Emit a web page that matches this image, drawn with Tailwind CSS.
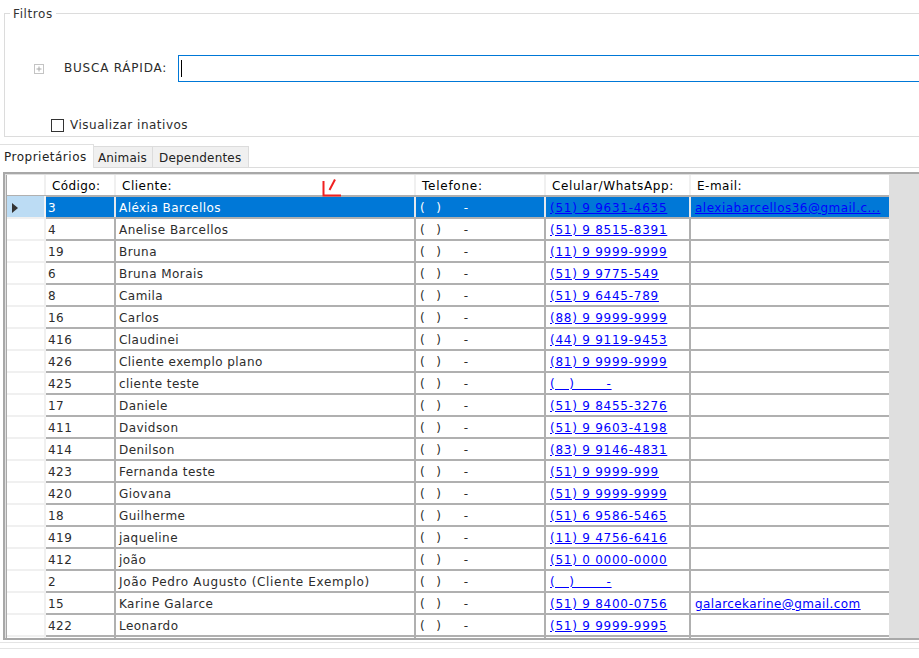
<!DOCTYPE html>
<html><head><meta charset="utf-8"><script src="https://cdn.jsdelivr.net/npm/@tailwindcss/browser@4"></script></head>
<body class="bg-white">
<div class="relative w-[919px] h-[658px] overflow-hidden bg-white font-['DejaVu_Sans',sans-serif] text-[12px] leading-[14px] text-[#2c2c2c] tracking-[0.45px] pt-[13px]">
  <section class="relative h-[124px] ml-[4px] border-t border-l border-b border-[#dcdcdc] flex flex-col">
    <span class="absolute left-[5px] top-[-7px] bg-white px-[3px] text-[#333] tracking-[0.6px]">Filtros</span>
    <div class="flex items-center mt-[41px] h-[27px]">
      <svg class="ml-[29px] w-[10px] h-[10px]" viewBox="0 0 10 10"><rect x="0.5" y="0.5" width="9" height="9" fill="none" stroke="#c4c4c4"/><path d="M2.5 5h5M5 2.5v5" stroke="#a8a8a8"/></svg>
      <span class="ml-[20px] w-[114px] tracking-[0.78px] mb-[2px]">BUSCA RÁPIDA:</span>
      <div class="flex-1 h-[27px] border-t border-b border-l border-[#0078d7] flex items-center pl-[2px] mr-[-2px]"><div class="w-px h-[17px] bg-black"></div></div>
    </div>
    <label class="flex items-center mt-[36px] ml-[46px]">
      <span class="w-[13px] h-[13px] border border-[#333] bg-white"></span>
      <span class="ml-[6px] tracking-[0.5px]">Visualizar inativos</span>
    </label>
  </section>
  <nav class="flex items-end h-[31px] border-b border-[#dcdcdc] text-[#222]">
    <div class="w-[94px] h-[24px] pl-[4px] pt-[5px] bg-white border-t border-r border-[#e0e0e0] mb-[-1px] tracking-[0.5px]">Proprietários</div>
    <div class="w-[59px] h-[21px] pl-[4px] pt-[4px] bg-[#f0f0f0] border-t border-r border-[#dcdcdc] tracking-[0.15px]">Animais</div>
    <div class="w-[96px] h-[21px] pl-[6px] pt-[4px] bg-[#f0f0f0] border-t border-r border-[#dcdcdc] tracking-[0.2px]">Dependentes</div>
  </nav>
  <div class="mt-[4px] ml-[3px] h-[468px] border-t-2 border-l-2 border-b-2 border-[#a8a8a8] pl-[1px] pt-px bg-[#dfdfdf] overflow-hidden">
    <div class="w-[883px] bg-white border-l border-[#a8a8a8] h-full overflow-hidden">
      <div class="flex h-[20px] text-black">
        <div class="w-[39px] border-r-2 border-[#f0f0f0]"></div>
        <div class="w-[70px] pl-[6px] pt-[4px] border-r-2 border-[#f0f0f0] tracking-[0.4px]">Código:</div>
        <div class="w-[300px] pl-[6px] pt-[4px] border-r-2 border-[#f0f0f0] tracking-[0.5px]">Cliente:</div>
        <div class="w-[130px] pl-[6px] pt-[4px] border-r-2 border-[#f0f0f0] tracking-[0.75px]">Telefone:</div>
        <div class="w-[145px] pl-[6px] pt-[4px] border-r-2 border-[#f0f0f0] tracking-[0.6px]">Celular/WhatsApp:</div>
        <div class="flex-1 pl-[6px] pt-[4px] tracking-[0.5px]">E-mail:</div>
      </div>
      <div class="flex h-[22px] border-t-2 border-[#b0b0b0] text-white">
        <div class="w-[39px] mt-[-1px] bg-[#bcdcf4] flex items-center pl-[5px] pt-[2px] border-r-2 border-[#f4f4f4]"><svg class="w-[6px] h-[10px]" viewBox="0 0 6 10"><path d="M0 0l6 5-6 5z" fill="#333"/></svg></div>
        <div class="w-[70px] pl-[2px] pt-[4px] border-r-2 border-[#e4e8ec] bg-[#0078d7]">3</div>
        <div class="w-[300px] pl-[3px] pt-[4px] border-r-2 border-[#e4e8ec] bg-[#0078d7]">Aléxia Barcellos</div>
        <div class="w-[130px] pl-[4px] pt-[4px] border-r-2 border-[#e4e8ec] bg-[#0078d7] whitespace-pre tracking-normal">(   )      -</div>
        <div class="w-[145px] pl-[4px] pt-[4px] border-r-2 border-[#e4e8ec] bg-[#0078d7] tracking-[0.75px]"><a class="text-[#0000ff] underline">(51) 9 9631-4635</a></div>
        <div class="flex-1 pl-[4px] pt-[4px] bg-[#0078d7] whitespace-nowrap tracking-[0.48px]"><a class="text-[#0000ff] underline">alexiabarcellos36@gmail.c...</a></div>
      </div>
      <div class="flex h-[22px] border-t-2 border-[#b0b0b0]"><div class="w-[39px] mt-[-2px] border-t-2 border-r-2 border-[#f0f0f0]"></div><div class="w-[70px] pl-[2px] pt-[4px] border-r-2 border-[#b0b0b0]">4</div><div class="w-[300px] pl-[3px] pt-[4px] border-r-2 border-[#b0b0b0]">Anelise Barcellos</div><div class="w-[130px] pl-[4px] pt-[4px] border-r-2 border-[#b0b0b0] whitespace-pre tracking-normal">(   )      -</div><div class="w-[145px] pl-[4px] pt-[4px] border-r-2 border-[#b0b0b0] tracking-[0.75px]"><a class="text-[#0000ff] underline">(51) 9 8515-8391</a></div><div class="flex-1 pl-[4px] pt-[4px] tracking-[0.48px]"></div></div>
      <div class="flex h-[22px] border-t-2 border-[#b0b0b0]"><div class="w-[39px] mt-[-2px] border-t-2 border-r-2 border-[#f0f0f0]"></div><div class="w-[70px] pl-[2px] pt-[4px] border-r-2 border-[#b0b0b0]">19</div><div class="w-[300px] pl-[3px] pt-[4px] border-r-2 border-[#b0b0b0]">Bruna</div><div class="w-[130px] pl-[4px] pt-[4px] border-r-2 border-[#b0b0b0] whitespace-pre tracking-normal">(   )      -</div><div class="w-[145px] pl-[4px] pt-[4px] border-r-2 border-[#b0b0b0] tracking-[0.75px]"><a class="text-[#0000ff] underline">(11) 9 9999-9999</a></div><div class="flex-1 pl-[4px] pt-[4px] tracking-[0.48px]"></div></div>
      <div class="flex h-[22px] border-t-2 border-[#b0b0b0]"><div class="w-[39px] mt-[-2px] border-t-2 border-r-2 border-[#f0f0f0]"></div><div class="w-[70px] pl-[2px] pt-[4px] border-r-2 border-[#b0b0b0]">6</div><div class="w-[300px] pl-[3px] pt-[4px] border-r-2 border-[#b0b0b0]">Bruna Morais</div><div class="w-[130px] pl-[4px] pt-[4px] border-r-2 border-[#b0b0b0] whitespace-pre tracking-normal">(   )      -</div><div class="w-[145px] pl-[4px] pt-[4px] border-r-2 border-[#b0b0b0] tracking-[0.75px]"><a class="text-[#0000ff] underline">(51) 9 9775-549</a></div><div class="flex-1 pl-[4px] pt-[4px] tracking-[0.48px]"></div></div>
      <div class="flex h-[22px] border-t-2 border-[#b0b0b0]"><div class="w-[39px] mt-[-2px] border-t-2 border-r-2 border-[#f0f0f0]"></div><div class="w-[70px] pl-[2px] pt-[4px] border-r-2 border-[#b0b0b0]">8</div><div class="w-[300px] pl-[3px] pt-[4px] border-r-2 border-[#b0b0b0]">Camila</div><div class="w-[130px] pl-[4px] pt-[4px] border-r-2 border-[#b0b0b0] whitespace-pre tracking-normal">(   )      -</div><div class="w-[145px] pl-[4px] pt-[4px] border-r-2 border-[#b0b0b0] tracking-[0.75px]"><a class="text-[#0000ff] underline">(51) 9 6445-789</a></div><div class="flex-1 pl-[4px] pt-[4px] tracking-[0.48px]"></div></div>
      <div class="flex h-[22px] border-t-2 border-[#b0b0b0]"><div class="w-[39px] mt-[-2px] border-t-2 border-r-2 border-[#f0f0f0]"></div><div class="w-[70px] pl-[2px] pt-[4px] border-r-2 border-[#b0b0b0]">16</div><div class="w-[300px] pl-[3px] pt-[4px] border-r-2 border-[#b0b0b0]">Carlos</div><div class="w-[130px] pl-[4px] pt-[4px] border-r-2 border-[#b0b0b0] whitespace-pre tracking-normal">(   )      -</div><div class="w-[145px] pl-[4px] pt-[4px] border-r-2 border-[#b0b0b0] tracking-[0.75px]"><a class="text-[#0000ff] underline">(88) 9 9999-9999</a></div><div class="flex-1 pl-[4px] pt-[4px] tracking-[0.48px]"></div></div>
      <div class="flex h-[22px] border-t-2 border-[#b0b0b0]"><div class="w-[39px] mt-[-2px] border-t-2 border-r-2 border-[#f0f0f0]"></div><div class="w-[70px] pl-[2px] pt-[4px] border-r-2 border-[#b0b0b0]">416</div><div class="w-[300px] pl-[3px] pt-[4px] border-r-2 border-[#b0b0b0]">Claudinei</div><div class="w-[130px] pl-[4px] pt-[4px] border-r-2 border-[#b0b0b0] whitespace-pre tracking-normal">(   )      -</div><div class="w-[145px] pl-[4px] pt-[4px] border-r-2 border-[#b0b0b0] tracking-[0.75px]"><a class="text-[#0000ff] underline">(44) 9 9119-9453</a></div><div class="flex-1 pl-[4px] pt-[4px] tracking-[0.48px]"></div></div>
      <div class="flex h-[22px] border-t-2 border-[#b0b0b0]"><div class="w-[39px] mt-[-2px] border-t-2 border-r-2 border-[#f0f0f0]"></div><div class="w-[70px] pl-[2px] pt-[4px] border-r-2 border-[#b0b0b0]">426</div><div class="w-[300px] pl-[3px] pt-[4px] border-r-2 border-[#b0b0b0]">Cliente exemplo plano</div><div class="w-[130px] pl-[4px] pt-[4px] border-r-2 border-[#b0b0b0] whitespace-pre tracking-normal">(   )      -</div><div class="w-[145px] pl-[4px] pt-[4px] border-r-2 border-[#b0b0b0] tracking-[0.75px]"><a class="text-[#0000ff] underline">(81) 9 9999-9999</a></div><div class="flex-1 pl-[4px] pt-[4px] tracking-[0.48px]"></div></div>
      <div class="flex h-[22px] border-t-2 border-[#b0b0b0]"><div class="w-[39px] mt-[-2px] border-t-2 border-r-2 border-[#f0f0f0]"></div><div class="w-[70px] pl-[2px] pt-[4px] border-r-2 border-[#b0b0b0]">425</div><div class="w-[300px] pl-[3px] pt-[4px] border-r-2 border-[#b0b0b0]">cliente teste</div><div class="w-[130px] pl-[4px] pt-[4px] border-r-2 border-[#b0b0b0] whitespace-pre tracking-normal">(   )      -</div><div class="w-[145px] pl-[4px] pt-[4px] border-r-2 border-[#b0b0b0] tracking-[0.75px] whitespace-pre"><a class="text-[#0000ff] underline">(   )       -</a></div><div class="flex-1 pl-[4px] pt-[4px] tracking-[0.48px]"></div></div>
      <div class="flex h-[22px] border-t-2 border-[#b0b0b0]"><div class="w-[39px] mt-[-2px] border-t-2 border-r-2 border-[#f0f0f0]"></div><div class="w-[70px] pl-[2px] pt-[4px] border-r-2 border-[#b0b0b0]">17</div><div class="w-[300px] pl-[3px] pt-[4px] border-r-2 border-[#b0b0b0]">Daniele</div><div class="w-[130px] pl-[4px] pt-[4px] border-r-2 border-[#b0b0b0] whitespace-pre tracking-normal">(   )      -</div><div class="w-[145px] pl-[4px] pt-[4px] border-r-2 border-[#b0b0b0] tracking-[0.75px]"><a class="text-[#0000ff] underline">(51) 9 8455-3276</a></div><div class="flex-1 pl-[4px] pt-[4px] tracking-[0.48px]"></div></div>
      <div class="flex h-[22px] border-t-2 border-[#b0b0b0]"><div class="w-[39px] mt-[-2px] border-t-2 border-r-2 border-[#f0f0f0]"></div><div class="w-[70px] pl-[2px] pt-[4px] border-r-2 border-[#b0b0b0]">411</div><div class="w-[300px] pl-[3px] pt-[4px] border-r-2 border-[#b0b0b0]">Davidson</div><div class="w-[130px] pl-[4px] pt-[4px] border-r-2 border-[#b0b0b0] whitespace-pre tracking-normal">(   )      -</div><div class="w-[145px] pl-[4px] pt-[4px] border-r-2 border-[#b0b0b0] tracking-[0.75px]"><a class="text-[#0000ff] underline">(51) 9 9603-4198</a></div><div class="flex-1 pl-[4px] pt-[4px] tracking-[0.48px]"></div></div>
      <div class="flex h-[22px] border-t-2 border-[#b0b0b0]"><div class="w-[39px] mt-[-2px] border-t-2 border-r-2 border-[#f0f0f0]"></div><div class="w-[70px] pl-[2px] pt-[4px] border-r-2 border-[#b0b0b0]">414</div><div class="w-[300px] pl-[3px] pt-[4px] border-r-2 border-[#b0b0b0]">Denilson</div><div class="w-[130px] pl-[4px] pt-[4px] border-r-2 border-[#b0b0b0] whitespace-pre tracking-normal">(   )      -</div><div class="w-[145px] pl-[4px] pt-[4px] border-r-2 border-[#b0b0b0] tracking-[0.75px]"><a class="text-[#0000ff] underline">(83) 9 9146-4831</a></div><div class="flex-1 pl-[4px] pt-[4px] tracking-[0.48px]"></div></div>
      <div class="flex h-[22px] border-t-2 border-[#b0b0b0]"><div class="w-[39px] mt-[-2px] border-t-2 border-r-2 border-[#f0f0f0]"></div><div class="w-[70px] pl-[2px] pt-[4px] border-r-2 border-[#b0b0b0]">423</div><div class="w-[300px] pl-[3px] pt-[4px] border-r-2 border-[#b0b0b0]">Fernanda teste</div><div class="w-[130px] pl-[4px] pt-[4px] border-r-2 border-[#b0b0b0] whitespace-pre tracking-normal">(   )      -</div><div class="w-[145px] pl-[4px] pt-[4px] border-r-2 border-[#b0b0b0] tracking-[0.75px]"><a class="text-[#0000ff] underline">(51) 9 9999-999</a></div><div class="flex-1 pl-[4px] pt-[4px] tracking-[0.48px]"></div></div>
      <div class="flex h-[22px] border-t-2 border-[#b0b0b0]"><div class="w-[39px] mt-[-2px] border-t-2 border-r-2 border-[#f0f0f0]"></div><div class="w-[70px] pl-[2px] pt-[4px] border-r-2 border-[#b0b0b0]">420</div><div class="w-[300px] pl-[3px] pt-[4px] border-r-2 border-[#b0b0b0]">Giovana</div><div class="w-[130px] pl-[4px] pt-[4px] border-r-2 border-[#b0b0b0] whitespace-pre tracking-normal">(   )      -</div><div class="w-[145px] pl-[4px] pt-[4px] border-r-2 border-[#b0b0b0] tracking-[0.75px]"><a class="text-[#0000ff] underline">(51) 9 9999-9999</a></div><div class="flex-1 pl-[4px] pt-[4px] tracking-[0.48px]"></div></div>
      <div class="flex h-[22px] border-t-2 border-[#b0b0b0]"><div class="w-[39px] mt-[-2px] border-t-2 border-r-2 border-[#f0f0f0]"></div><div class="w-[70px] pl-[2px] pt-[4px] border-r-2 border-[#b0b0b0]">18</div><div class="w-[300px] pl-[3px] pt-[4px] border-r-2 border-[#b0b0b0]">Guilherme</div><div class="w-[130px] pl-[4px] pt-[4px] border-r-2 border-[#b0b0b0] whitespace-pre tracking-normal">(   )      -</div><div class="w-[145px] pl-[4px] pt-[4px] border-r-2 border-[#b0b0b0] tracking-[0.75px]"><a class="text-[#0000ff] underline">(51) 6 9586-5465</a></div><div class="flex-1 pl-[4px] pt-[4px] tracking-[0.48px]"></div></div>
      <div class="flex h-[22px] border-t-2 border-[#b0b0b0]"><div class="w-[39px] mt-[-2px] border-t-2 border-r-2 border-[#f0f0f0]"></div><div class="w-[70px] pl-[2px] pt-[4px] border-r-2 border-[#b0b0b0]">419</div><div class="w-[300px] pl-[3px] pt-[4px] border-r-2 border-[#b0b0b0]">jaqueline</div><div class="w-[130px] pl-[4px] pt-[4px] border-r-2 border-[#b0b0b0] whitespace-pre tracking-normal">(   )      -</div><div class="w-[145px] pl-[4px] pt-[4px] border-r-2 border-[#b0b0b0] tracking-[0.75px]"><a class="text-[#0000ff] underline">(11) 9 4756-6416</a></div><div class="flex-1 pl-[4px] pt-[4px] tracking-[0.48px]"></div></div>
      <div class="flex h-[22px] border-t-2 border-[#b0b0b0]"><div class="w-[39px] mt-[-2px] border-t-2 border-r-2 border-[#f0f0f0]"></div><div class="w-[70px] pl-[2px] pt-[4px] border-r-2 border-[#b0b0b0]">412</div><div class="w-[300px] pl-[3px] pt-[4px] border-r-2 border-[#b0b0b0]">joão</div><div class="w-[130px] pl-[4px] pt-[4px] border-r-2 border-[#b0b0b0] whitespace-pre tracking-normal">(   )      -</div><div class="w-[145px] pl-[4px] pt-[4px] border-r-2 border-[#b0b0b0] tracking-[0.75px]"><a class="text-[#0000ff] underline">(51) 0 0000-0000</a></div><div class="flex-1 pl-[4px] pt-[4px] tracking-[0.48px]"></div></div>
      <div class="flex h-[22px] border-t-2 border-[#b0b0b0]"><div class="w-[39px] mt-[-2px] border-t-2 border-r-2 border-[#f0f0f0]"></div><div class="w-[70px] pl-[2px] pt-[4px] border-r-2 border-[#b0b0b0]">2</div><div class="w-[300px] pl-[3px] pt-[4px] border-r-2 border-[#b0b0b0] tracking-[0.66px]">João Pedro Augusto (Cliente Exemplo)</div><div class="w-[130px] pl-[4px] pt-[4px] border-r-2 border-[#b0b0b0] whitespace-pre tracking-normal">(   )      -</div><div class="w-[145px] pl-[4px] pt-[4px] border-r-2 border-[#b0b0b0] tracking-[0.75px] whitespace-pre"><a class="text-[#0000ff] underline">(   )       -</a></div><div class="flex-1 pl-[4px] pt-[4px] tracking-[0.48px]"></div></div>
      <div class="flex h-[22px] border-t-2 border-[#b0b0b0]"><div class="w-[39px] mt-[-2px] border-t-2 border-r-2 border-[#f0f0f0]"></div><div class="w-[70px] pl-[2px] pt-[4px] border-r-2 border-[#b0b0b0]">15</div><div class="w-[300px] pl-[3px] pt-[4px] border-r-2 border-[#b0b0b0]">Karine Galarce</div><div class="w-[130px] pl-[4px] pt-[4px] border-r-2 border-[#b0b0b0] whitespace-pre tracking-normal">(   )      -</div><div class="w-[145px] pl-[4px] pt-[4px] border-r-2 border-[#b0b0b0] tracking-[0.75px]"><a class="text-[#0000ff] underline">(51) 9 8400-0756</a></div><div class="flex-1 pl-[4px] pt-[4px] tracking-[0.4px]"><a class="text-[#0000ff] underline">galarcekarine@gmail.com</a></div></div>
      <div class="flex h-[22px] border-t-2 border-[#b0b0b0]"><div class="w-[39px] mt-[-2px] border-t-2 border-r-2 border-[#f0f0f0]"></div><div class="w-[70px] pl-[2px] pt-[4px] border-r-2 border-[#b0b0b0]">422</div><div class="w-[300px] pl-[3px] pt-[4px] border-r-2 border-[#b0b0b0]">Leonardo</div><div class="w-[130px] pl-[4px] pt-[4px] border-r-2 border-[#b0b0b0] whitespace-pre tracking-normal">(   )      -</div><div class="w-[145px] pl-[4px] pt-[4px] border-r-2 border-[#b0b0b0] tracking-[0.75px]"><a class="text-[#0000ff] underline">(51) 9 9999-9995</a></div><div class="flex-1 pl-[4px] pt-[4px] tracking-[0.48px]"></div></div>
      <div class="flex h-[22px] border-t-2 border-[#b0b0b0]"><div class="w-[39px] mt-[-2px] border-t-2 border-r-2 border-[#f0f0f0]"></div><div class="w-[70px] border-r-2 border-[#b0b0b0]"></div><div class="w-[300px] border-r-2 border-[#b0b0b0]"></div><div class="w-[130px] border-r-2 border-[#b0b0b0]"></div><div class="w-[145px] border-r-2 border-[#b0b0b0]"></div><div class="flex-1"></div></div>
    </div>
  </div>
  <div class="h-px mt-[2px] bg-[#e4e4e4]"></div>
  <div class="h-px mt-[5px] bg-[#e4e4e4]"></div>
  <svg class="absolute left-[318px] top-[174px] w-[30px] h-[26px]" viewBox="0 0 30 26"><path d="M5.5 7v14.5H23" fill="none" stroke="#f02020" stroke-width="2"/><path d="M11.5 16L17 5.5" fill="none" stroke="#f02020" stroke-width="2"/></svg>
</div>
</body></html>
